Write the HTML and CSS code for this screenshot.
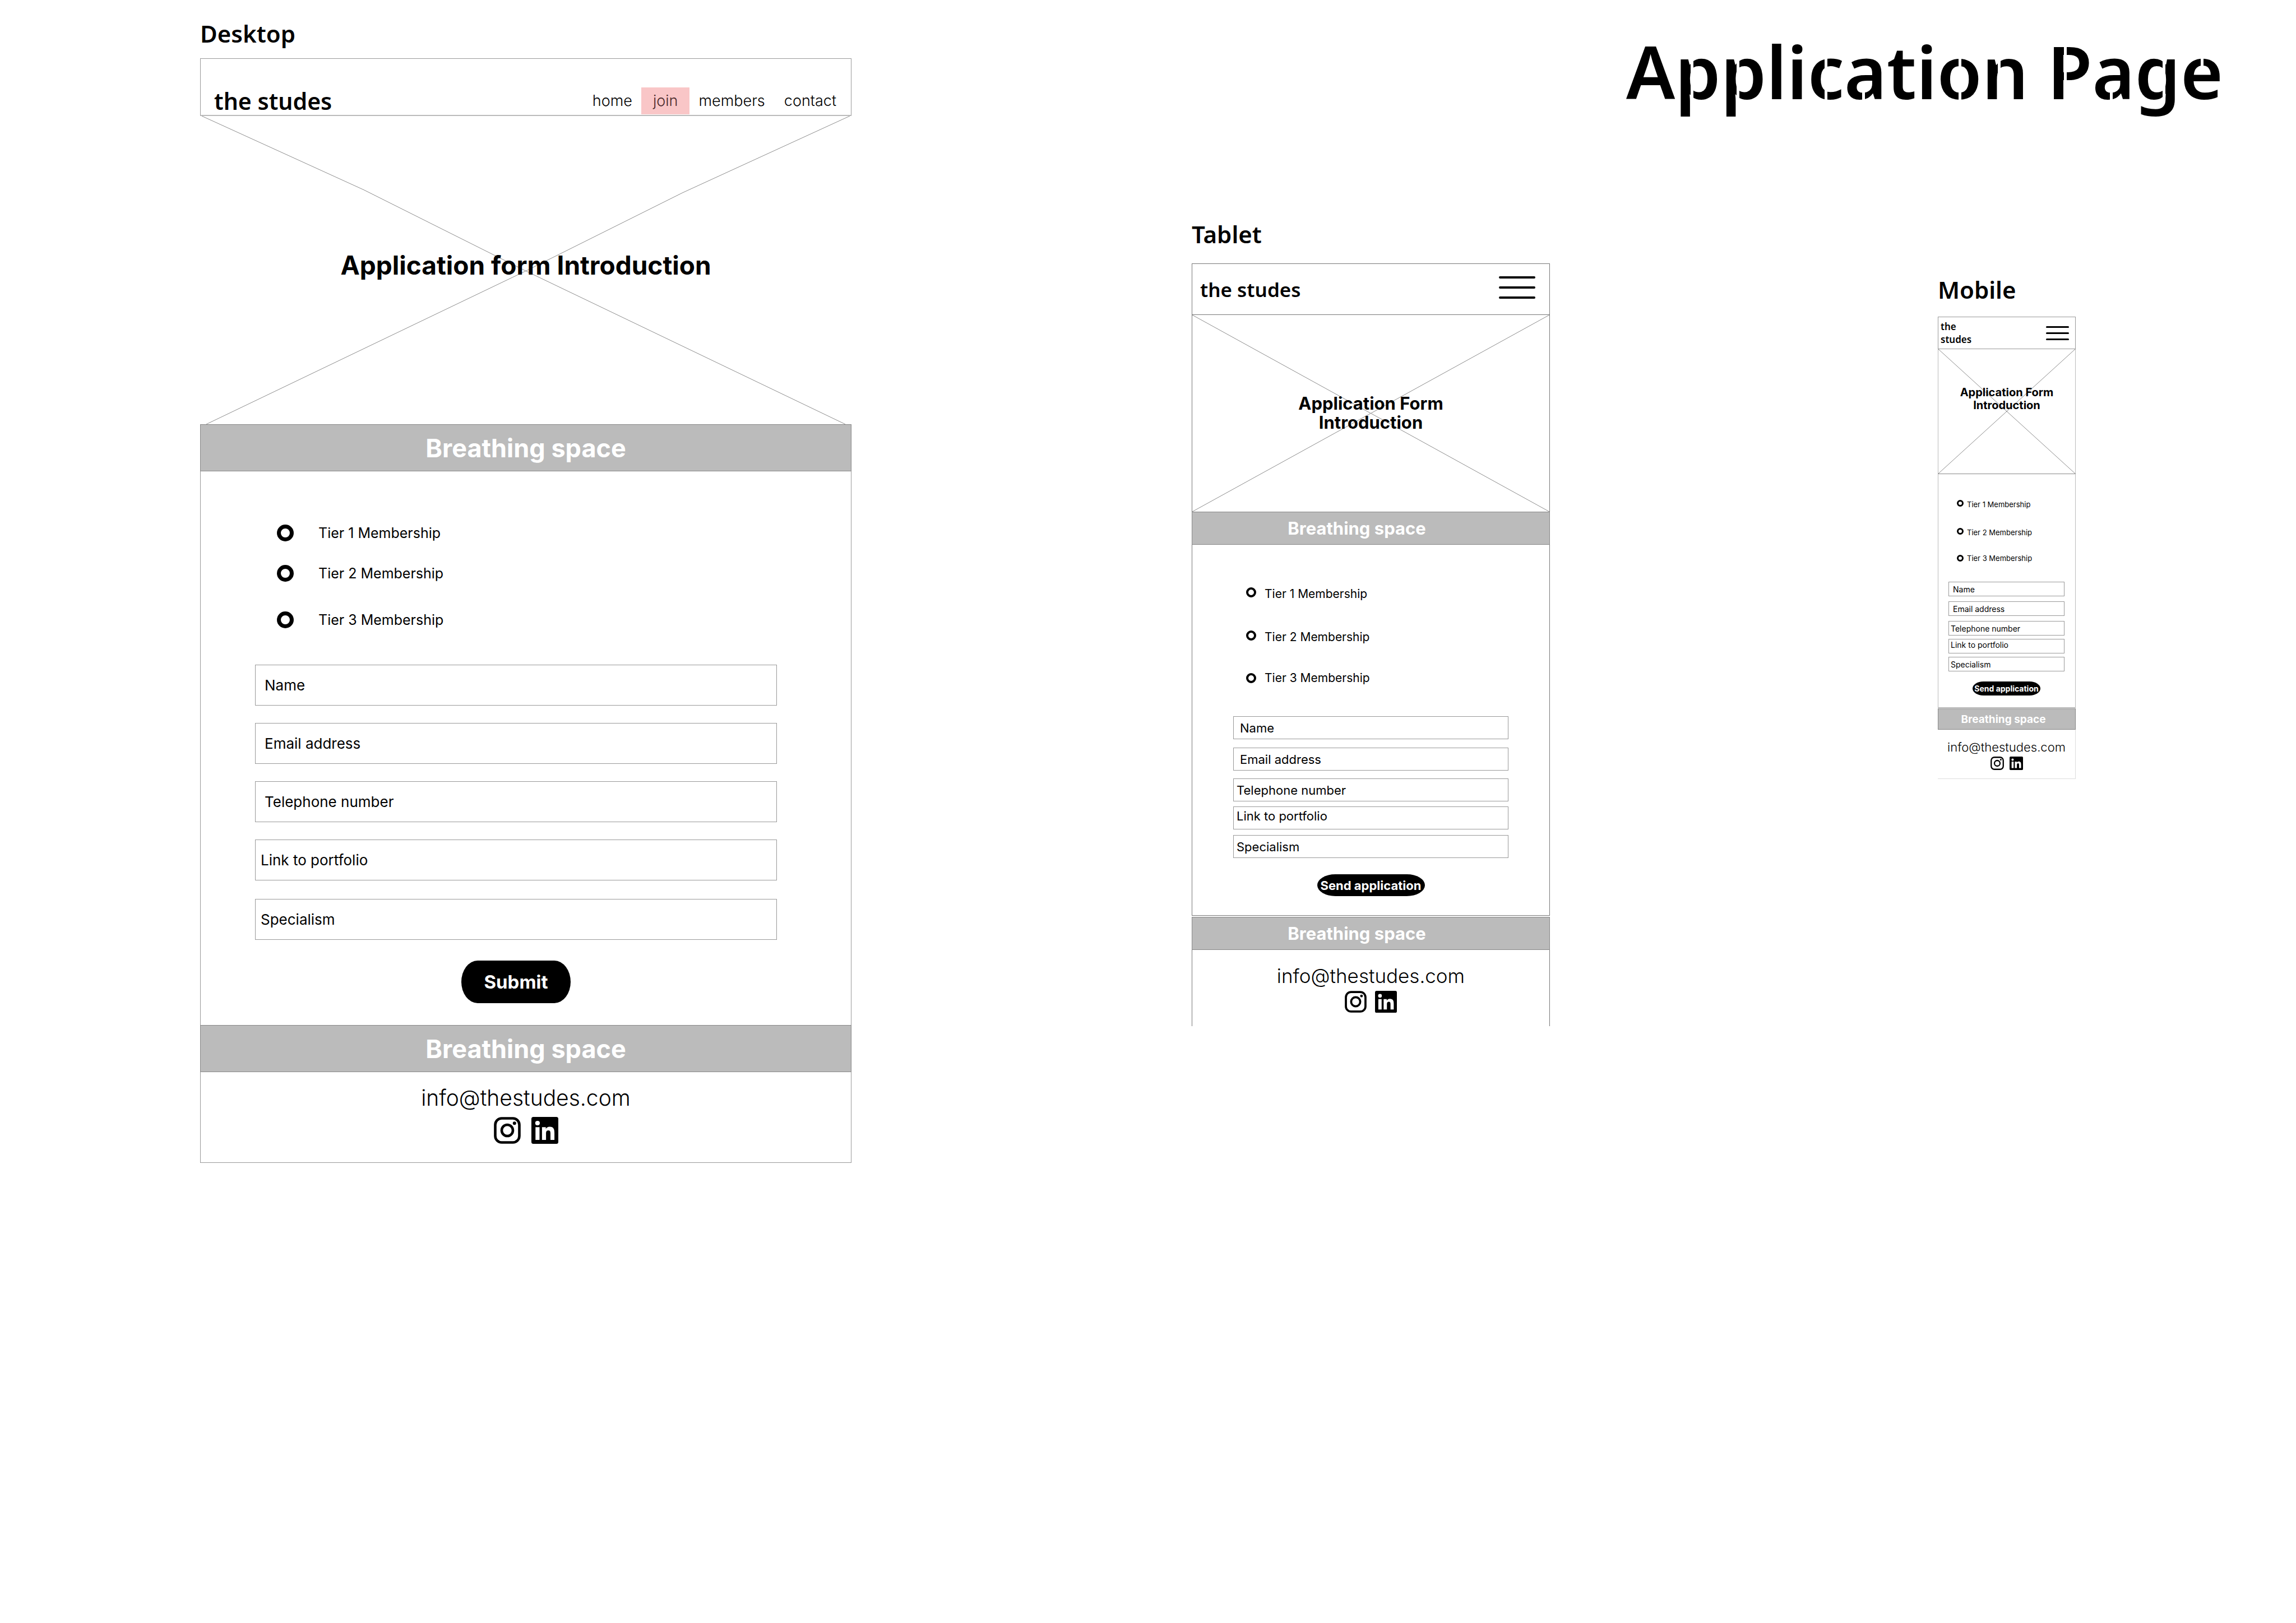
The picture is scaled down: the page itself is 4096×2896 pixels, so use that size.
FILE: index.html
```html
<!DOCTYPE html>
<html lang="en">
<head>
<meta charset="utf-8">
<title>Application Page</title>
<link rel="stylesheet" href="styles.css">
</head>
<body>
<svg class="sprite" aria-hidden="true">
  <symbol id="instagram" viewBox="0 0 48 48">
    <rect x="2.5" y="2.5" width="43" height="43" rx="11.5" fill="none" stroke="#000" stroke-width="4.6"/>
    <circle cx="24" cy="24" r="10" fill="none" stroke="#000" stroke-width="4.6"/>
    <circle cx="36.8" cy="11.2" r="3" fill="#000"/>
  </symbol>
  <symbol id="linkedin" viewBox="0 0 48 48">
    <rect width="48" height="48" rx="3.5" fill="#000"/>
    <circle cx="10.9" cy="11" r="4.1" fill="#fff"/>
    <path fill="#fff" d="M7.3 18.2h7.2V41H7.3zM18.9 18.2h6.8v3.1h.1c1-1.8 3.3-3.7 6.8-3.7 7.2 0 8.5 4.7 8.5 10.9V41H34V29.9c0-2.7 0-6-3.7-6s-4.2 2.9-4.2 5.9V41h-7.2z"/>
  </symbol>
</svg>
<main class="board">
  <h1 class="board__title">A<span class="cut cut--stem">p</span><span class="cut cut--stem">p</span>li<span class="cut cut--mid">c</span><span class="cut cut--foot">a</span>ti<span class="cut cut--mid">o</span><span class="cut cut--stem">n</span> <span class="cut cut--cap">P</span><span class="cut cut--foot">a</span><span class="cut cut--right">g</span><span class="cut cut--top">e</span></h1>

  <section class="device desktop">
    <h2 class="device__name">Desktop</h2>
    <div class="frame">
      <header class="bar">
        <div class="logo">the studes</div>
        <nav class="nav">
          <a href="#">home</a>
          <a href="#" class="nav__current">join</a>
          <a href="#">members</a>
          <a href="#" class="nav__last">contact</a>
        </nav>
      </header>
      <div class="hero">
        <svg class="hero__cross" viewBox="0 0 1162 551" preserveAspectRatio="none" aria-hidden="true">
          <path d="M3 0L292 132L581 277L1151 551M1159 0L861 137L581 277L11 551"/>
        </svg>
        <h3 class="hero__title">Application form Introduction</h3>
      </div>
      <div class="band">Breathing space</div>
      <form class="form">
        <div class="options">
          <label class="option"><input type="radio" name="tier-d"><span>Tier 1 Membership</span></label>
          <label class="option"><input type="radio" name="tier-d"><span>Tier 2 Membership</span></label>
          <label class="option"><input type="radio" name="tier-d"><span>Tier 3 Membership</span></label>
        </div>
        <div class="fields">
          <input class="field" type="text" placeholder="Name" aria-label="Name">
          <input class="field" type="email" placeholder="Email address" aria-label="Email address">
          <input class="field" type="tel" placeholder="Telephone number" aria-label="Telephone number">
          <input class="field field--tight" type="text" placeholder="Link to portfolio" aria-label="Link to portfolio">
          <input class="field field--tight" type="text" placeholder="Specialism" aria-label="Specialism">
        </div>
        <button class="send" type="button">Submit</button>
      </form>
      <div class="band">Breathing space</div>
      <footer class="foot">
        <a class="foot__mail" href="#">info@thestudes.com</a>
        <div class="foot__icons">
          <a href="#" aria-label="Instagram"><svg><use href="#instagram"/></svg></a>
          <a href="#" aria-label="LinkedIn"><svg><use href="#linkedin"/></svg></a>
        </div>
      </footer>
    </div>
  </section>

  <section class="device tablet">
    <h2 class="device__name">Tablet</h2>
    <div class="frame">
      <header class="bar">
        <div class="logo">the studes</div>
        <button class="menu" type="button" aria-label="Menu"><i></i><i></i><i></i></button>
      </header>
      <div class="hero">
        <svg class="hero__cross" viewBox="0 0 100 100" preserveAspectRatio="none" aria-hidden="true">
          <path d="M0 0L100 100M100 0L0 100"/>
        </svg>
        <h3 class="hero__title">Application Form<br>Introduction</h3>
      </div>
      <div class="band">Breathing space</div>
      <form class="form">
        <div class="options">
          <label class="option"><input type="radio" name="tier-t"><span>Tier 1 Membership</span></label>
          <label class="option"><input type="radio" name="tier-t"><span>Tier 2 Membership</span></label>
          <label class="option"><input type="radio" name="tier-t"><span>Tier 3 Membership</span></label>
        </div>
        <div class="fields">
          <input class="field" type="text" placeholder="Name" aria-label="Name">
          <input class="field" type="email" placeholder="Email address" aria-label="Email address">
          <input class="field field--tight" type="tel" placeholder="Telephone number" aria-label="Telephone number">
          <input class="field field--tight field--raised" type="text" placeholder="Link to portfolio" aria-label="Link to portfolio">
          <input class="field field--tight" type="text" placeholder="Specialism" aria-label="Specialism">
        </div>
        <button class="send" type="button">Send application</button>
      </form>
      <div class="band">Breathing space</div>
      <footer class="foot">
        <a class="foot__mail" href="#">info@thestudes.com</a>
        <div class="foot__icons">
          <a href="#" aria-label="Instagram"><svg><use href="#instagram"/></svg></a>
          <a href="#" aria-label="LinkedIn"><svg><use href="#linkedin"/></svg></a>
        </div>
      </footer>
    </div>
  </section>

  <section class="device mobile">
    <h2 class="device__name">Mobile</h2>
    <div class="frame">
      <header class="bar">
        <div class="logo">the<br>studes</div>
        <button class="menu" type="button" aria-label="Menu"><i></i><i></i><i></i></button>
      </header>
      <div class="hero">
        <svg class="hero__cross" viewBox="0 0 100 100" preserveAspectRatio="none" aria-hidden="true">
          <path d="M0 0L100 100M100 0L0 100"/>
        </svg>
        <h3 class="hero__title">Application Form<br>Introduction</h3>
      </div>
      <form class="form">
        <div class="options">
          <label class="option"><input type="radio" name="tier-m"><span>Tier 1 Membership</span></label>
          <label class="option"><input type="radio" name="tier-m"><span>Tier 2 Membership</span></label>
          <label class="option"><input type="radio" name="tier-m"><span>Tier 3 Membership</span></label>
        </div>
        <div class="fields">
          <input class="field" type="text" placeholder="Name" aria-label="Name">
          <input class="field" type="email" placeholder="Email address" aria-label="Email address">
          <input class="field field--tight" type="tel" placeholder="Telephone number" aria-label="Telephone number">
          <input class="field field--tight field--raised" type="text" placeholder="Link to portfolio" aria-label="Link to portfolio">
          <input class="field field--tight" type="text" placeholder="Specialism" aria-label="Specialism">
        </div>
        <button class="send" type="button">Send application</button>
      </form>
      <div class="band">Breathing space</div>
      <footer class="foot">
        <a class="foot__mail" href="#">info@thestudes.com</a>
        <div class="foot__icons">
          <a href="#" aria-label="Instagram"><svg><use href="#instagram"/></svg></a>
          <a href="#" aria-label="LinkedIn"><svg><use href="#linkedin"/></svg></a>
        </div>
      </footer>
    </div>
  </section>
</main>
</body>
</html>
```
FILE: styles.css
```css
* { box-sizing: border-box; }

body {
  margin: 0;
  background: #fff;
  color: #000;
  font-family: Inter, "Liberation Sans", sans-serif;
}

h1, h2, h3 { margin: 0; }
a { color: inherit; text-decoration: none; }

.sprite { display: none; }

/* Board: the three devices side by side, in proportion to the window */
.board {
  display: grid;
  grid-template-columns: 357fr 1162fr 607fr 639fr 692fr 246fr 393fr;
  grid-template-rows: auto 1fr;
  align-items: start;
}

.board__title {
  grid-column: 4 / 8;
  grid-row: 1;
  padding: 47px 130px 0 0;
  text-align: right;
  font: 600 130px/160px "Noto Sans", "Open Sans", sans-serif;
}

/* Stencil bridges of the title's letters */
.cut { position: relative; }

.cut::after {
  content: "";
  position: absolute;
  left: 28px;
  bottom: 32px;
  width: 5px;
  height: 86px;
  background: #fff;
}

.cut--mid::after { left: calc(50% - 2px); }
.cut--cap::after { left: 29px; height: 104px; }
.cut--foot::after { left: 32px; height: 26px; }
.cut--right::after { left: calc(100% - 32px); bottom: 38px; height: 80px; }
.cut--top::after { left: calc(50% - 2px); bottom: 92px; height: 26px; }

.device { min-width: 0; }

.device__name {
  margin-bottom: var(--name-gap);
  font: 600 42px/50px "Noto Sans", "Open Sans", sans-serif;
  white-space: nowrap;
}

.desktop {
  grid-column: 2;
  grid-row: 1 / 3;
  padding-top: 35px;
  --name-gap: 19px;
  --line: #999;
  --logo: 41px;
  --logo-line: 48px;
  --title: 46px;
  --title-line: 48px;
  --band: 84px;
  --band-text: 45px;
  --option-text: 25px;
  --option-line: 40px;
  --radio: 30px;
  --ring: 7px;
  --radio-gap: 44px;
  --field-text: 26px;
  --pad: 16px;
  --pad-tight: 9px;
  --mail: 39px;
  --mail-line: 48px;
  --icon: 48px;
  --icon-gap: 19px;
}

.tablet {
  grid-column: 4;
  grid-row: 2;
  padding-top: 186px;
  --name-gap: 27px;
  --line: #777;
  --logo: 35px;
  --logo-line: 40px;
  --title: 31px;
  --title-line: 34px;
  --band: 59px;
  --band-text: 31px;
  --option-text: 21px;
  --option-line: 24px;
  --radio: 18px;
  --ring: 4px;
  --radio-gap: 15px;
  --field-text: 22px;
  --pad: 11px;
  --pad-tight: 5px;
  --mail: 35px;
  --mail-line: 44px;
  --icon: 39px;
  --icon-gap: 15px;
}

.mobile {
  grid-column: 6;
  grid-row: 2;
  padding-top: 285px;
  --name-gap: 23px;
  --line: #999;
  --logo: 17px;
  --logo-line: 23px;
  --title: 20px;
  --title-line: 23px;
  --band: 38px;
  --band-text: 19px;
  --option-text: 13px;
  --option-line: 16px;
  --radio: 12px;
  --ring: 3px;
  --radio-gap: 6px;
  --field-text: 14px;
  --pad: 7px;
  --pad-tight: 3px;
  --mail: 22px;
  --mail-line: 28px;
  --icon: 24px;
  --icon-gap: 10px;
}

/* Top bar */
.bar {
  display: flex;
  justify-content: space-between;
  align-items: center;
  border: 1px solid var(--line);
}

.desktop .bar { height: 103px; padding: 0 26px 1px 24px; align-items: flex-end; border-bottom: 2px solid #bbb; }
.tablet .bar { height: 92px; padding: 2px 25px 0 14px; }
.mobile .bar { height: 58px; padding: 0 11px 0 4px; }

.logo {
  font: 600 var(--logo)/var(--logo-line) "Noto Sans", "Open Sans", sans-serif;
}

.nav {
  display: flex;
  gap: 16px;
  font-size: 27px;
  font-weight: 300;
  line-height: 48px;
}

.nav__current { padding: 0 21px; background: #f9c6c7; color: #4a2a2c; }
.nav__last { margin-left: 18px; }

.menu {
  display: flex;
  flex-direction: column;
  padding: 0;
  border: 0;
  background: none;
}

.menu i { display: block; background: #000; border-radius: 2px; }
.tablet .menu { gap: 14px; width: 65px; margin-bottom: 8px; }
.tablet .menu i { height: 4px; }
.mobile .menu { gap: 8px; width: 41px; }
.mobile .menu i { height: 3px; }

/* Picture placeholder */
.hero {
  position: relative;
  display: flex;
  align-items: center;
  justify-content: center;
  text-align: center;
}

.desktop .hero { height: 550px; padding-bottom: 18px; }
.tablet .hero { height: 351px; padding-bottom: 2px; border: solid var(--line); border-width: 0 1px; }
.mobile .hero { height: 222px; padding-bottom: 45px; border: solid #bbb; border-width: 0 1px; }

.hero__cross {
  position: absolute;
  inset: 0;
  width: 100%;
  height: 100%;
}

.hero__cross path {
  fill: none;
  stroke: #8c8c8c;
  stroke-width: 1px;
  vector-effect: non-scaling-stroke;
}

.hero__title {
  position: relative;
  font-size: var(--title);
  line-height: var(--title-line);
  font-weight: 700;
}

.band {
  display: flex;
  align-items: center;
  justify-content: center;
  height: var(--band);
  border: 1px solid #888;
  background: #bbb;
  color: #fff;
  font-size: var(--band-text);
  font-weight: 700;
}

.tablet .band { padding-right: 50px; }
.mobile .band { padding-right: 12px; }

/* Application form */
.form {
  display: flex;
  flex-direction: column;
  border: solid var(--line);
  border-width: 0 1px;
}

.desktop .form { padding: 90px 132px 39px 97px; }
.tablet .form { padding: 76px 73px 34px 73px; margin-bottom: 2px; border-bottom-width: 1px; }
.mobile .form { padding: 46px 19px 21px 18px; margin-bottom: 1px; border-color: #bbb; border-bottom: 1px solid #999; border-top: 1px solid #888; }

.options { display: grid; }
.desktop .options { grid-template-rows: 72px 83px 40px; padding-left: 39px; margin-bottom: 60px; }
.tablet .options { grid-template-rows: 77px 73px 24px; padding-left: 23px; margin-bottom: 56px; }
.mobile .options { grid-template-rows: 50px 46px 16px; padding-left: 15px; margin-bottom: 34px; }

.option {
  display: flex;
  align-items: flex-start;
  justify-self: start;
  gap: var(--radio-gap);
  height: var(--option-line);
  font-size: var(--option-text);
  line-height: var(--option-line);
}

.desktop .option, .option:last-child { align-items: center; }

.option input {
  appearance: none;
  width: var(--radio);
  height: var(--radio);
  margin: 0;
  border: var(--ring) solid #000;
  border-radius: 50%;
  background: #fff;
}

.option input:checked { background: #888; }

.fields { display: grid; align-items: start; }
.desktop .fields { grid-template-rows: repeat(3, 104px) 106px 73px; }
.tablet .fields { grid-template-rows: 56px 55px 50px 51px 41px; }
.mobile .fields { grid-template-rows: 35px 35px 32px 32px 26px; }

.field {
  width: 100%;
  padding: 0 var(--pad);
  border: 1px solid #999;
  border-radius: 0;
  background: #fff;
  color: #000;
  font-family: inherit;
  font-size: var(--field-text);
}

.desktop .field { height: 73px; }
.tablet .field { height: 41px; }
.mobile .field { height: 26px; }

.field::placeholder { color: #000; opacity: 1; }
.field--tight { padding-left: var(--pad-tight); }
.tablet .field--raised { padding-bottom: 7px; }
.mobile .field--raised { padding-bottom: 5px; }

.send {
  align-self: center;
  padding: 0;
  border: 0;
  background: #000;
  color: #fff;
  font-family: inherit;
  font-weight: 700;
  white-space: nowrap;
}

.desktop .send { width: 195px; height: 76px; margin-top: 37px; border-radius: 29px / 38px; font-size: 33px; }
.tablet .send { width: 192px; height: 39px; margin-top: 29px; border-radius: 33px / 20px; font-size: 22px; }
.mobile .send { width: 121px; height: 25px; margin-top: 18px; border-radius: 20px / 13px; font-size: 14px; }

/* Footer */
.foot {
  display: flex;
  flex-direction: column;
  align-items: center;
  border: solid var(--line);
  border-width: 0 1px;
}

.desktop .foot { padding: 22px 0 33px; gap: 10px; border-bottom-width: 1px; }
.tablet .foot { padding: 24px 0; gap: 5px; }
.mobile .foot { padding: 17px 0 15px; gap: 3px; border-color: #ddd; border-width: 0 1px 1px 0; }

.foot__mail {
  font-size: var(--mail);
  line-height: var(--mail-line);
  font-weight: 300;
}

.foot__icons { display: flex; gap: var(--icon-gap); }
.foot__icons svg { display: block; width: var(--icon); height: var(--icon); }
```
